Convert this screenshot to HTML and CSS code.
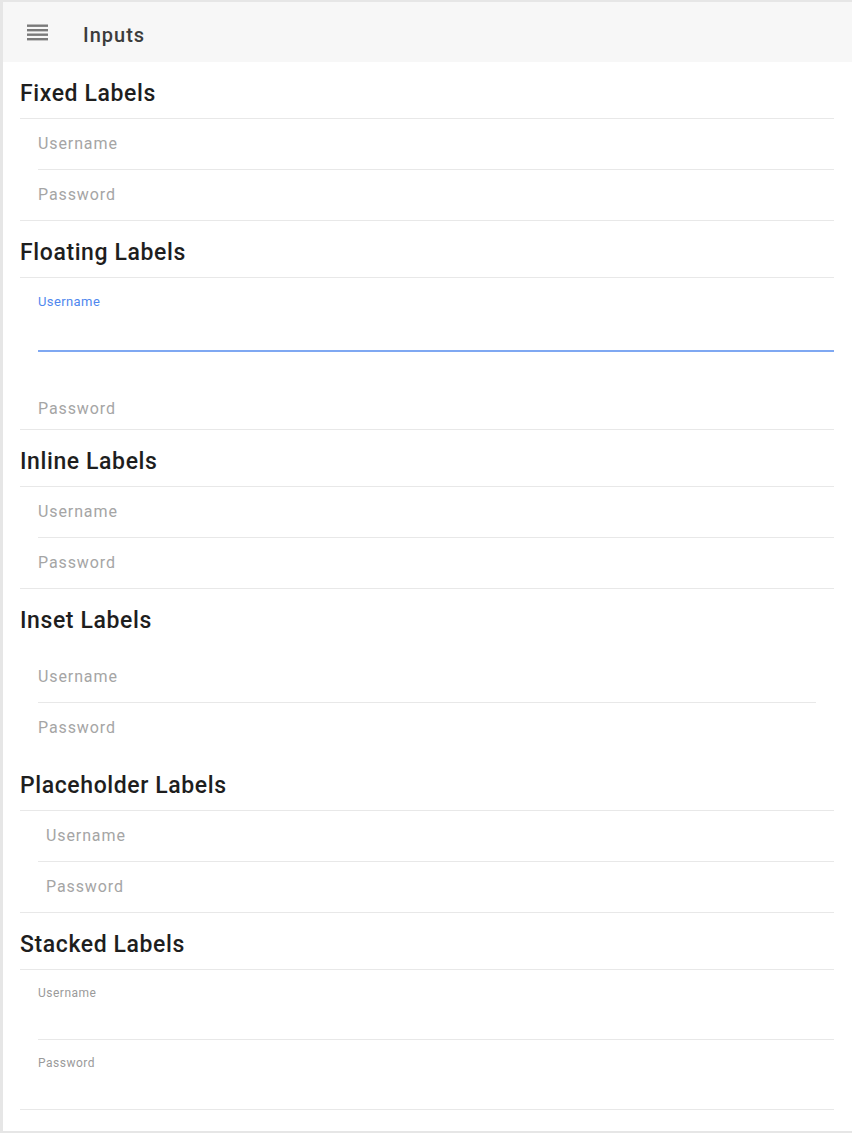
FILE: index.html
```html
<!DOCTYPE html>
<html lang="en">
<head>
<meta charset="utf-8">
<title>Inputs</title>
<link rel="stylesheet" href="styles.css">
</head>
<body>
<div class="frame">
  <header class="toolbar">
    <svg class="menu-icon" width="21" height="17" viewBox="0 0 21 17" aria-hidden="true">
      <rect x="0" y="0.5" width="21" height="2.4" fill="#7a7a7a"/>
      <rect x="0" y="5" width="21" height="2.4" fill="#7a7a7a"/>
      <rect x="0" y="9.5" width="21" height="2.4" fill="#7a7a7a"/>
      <rect x="0" y="14" width="21" height="2.4" fill="#7a7a7a"/>
    </svg>
    <span class="title">Inputs</span>
  </header>

  <main class="content">
    <section class="group">
      <h2 class="group-title">Fixed Labels</h2>
      <div class="list">
        <div class="item"><div class="item-inner"><span class="ph">Username</span></div></div>
        <div class="item last"><div class="item-inner"><span class="ph">Password</span></div></div>
      </div>
    </section>

    <section class="group">
      <h2 class="group-title">Floating Labels</h2>
      <div class="list">
        <div class="item"><div class="item-inner floating focused">
          <span class="float-label">Username</span>
          <div class="input-area"></div>
        </div></div>
        <div class="item last"><div class="item-inner floating-rest"><span class="ph">Password</span></div></div>
      </div>
    </section>

    <section class="group">
      <h2 class="group-title">Inline Labels</h2>
      <div class="list">
        <div class="item"><div class="item-inner"><span class="ph">Username</span></div></div>
        <div class="item last"><div class="item-inner"><span class="ph">Password</span></div></div>
      </div>
    </section>

    <section class="group">
      <h2 class="group-title plain">Inset Labels</h2>
      <div class="list inset">
        <div class="item"><div class="item-inner"><span class="ph">Username</span></div></div>
        <div class="item last"><div class="item-inner"><span class="ph">Password</span></div></div>
      </div>
    </section>

    <section class="group">
      <h2 class="group-title">Placeholder Labels</h2>
      <div class="list">
        <div class="item"><div class="item-inner indent"><span class="ph">Username</span></div></div>
        <div class="item last"><div class="item-inner indent"><span class="ph">Password</span></div></div>
      </div>
    </section>

    <section class="group">
      <h2 class="group-title">Stacked Labels</h2>
      <div class="list">
        <div class="item"><div class="item-inner stacked"><span class="stack-label">Username</span></div></div>
        <div class="item last"><div class="item-inner stacked"><span class="stack-label">Password</span></div></div>
      </div>
    </section>
  </main>
</div>
</body>
</html>
```

FILE: styles.css
```css
* { box-sizing: border-box; }

html, body {
  margin: 0;
  padding: 0;
  background: #ffffff;
}

body {
  font-family: Roboto, "Liberation Sans", Arial, sans-serif;
  color: #222;
}

.frame {
  border-top: 2px solid #e6e6e6;
  border-left: 3px solid #e6e6e6;
  border-bottom: 2px solid #e6e6e6;
}

.toolbar {
  height: 60px;
  background: #f7f7f7;
  display: flex;
  align-items: center;
  padding-left: 24px;
}

.menu-icon {
  display: block;
}

.title {
  margin-left: 35px;
  padding-top: 5px;
  font-size: 20px;
  font-weight: 500;
  letter-spacing: 1px;
  color: #3c3c3c;
  line-height: 24px;
}

.content {
  padding: 0 18px 21px 17px;
}

.group-title {
  margin: 0;
  padding: 18px 0 10px;
  font-size: 23px;
  letter-spacing: 0.6px;
  line-height: 28px;
  font-weight: 500;
  color: #1e1e1e;
  border-bottom: 1px solid #e8e8e8;
}

.group-title.plain {
  border-bottom-color: transparent;
}

.list {
  display: flex;
  flex-direction: column;
}

.item {
  padding-left: 18px;
}

.item.last {
  border-bottom: 1px solid #e8e8e8;
}

.item-inner {
  height: 51px;
  display: flex;
  align-items: center;
  border-bottom: 1px solid #e8e8e8;
}

.item.last .item-inner {
  height: 50px;
  border-bottom: none;
}

.ph {
  font-size: 16px;
  letter-spacing: 0.9px;
  color: #a5a5a5;
  line-height: 20px;
}

/* Floating labels */
.item-inner.floating {
  height: 74px;
  display: block;
  padding-top: 17px;
  border-bottom: 2px solid #7fa8f2;
}

.float-label {
  display: block;
  font-size: 13px;
  letter-spacing: 0.4px;
  line-height: 14px;
  color: #4f87ee;
}

.input-area {
  height: 41px;
}

.item.last .item-inner.floating-rest {
  height: 77px;
  display: block;
  padding-top: 45px;
}

.floating-rest .ph {
  display: block;
  line-height: 24px;
}

/* Inset list */
.list.inset {
  margin: 6px 18px 0 0;
}

.list.inset .item.last {
  border-bottom-color: transparent;
}

/* Placeholder labels */
.item-inner.indent {
  padding-left: 8px;
}

/* Stacked labels */
.item-inner.stacked {
  height: 70px;
  display: block;
  padding-top: 17px;
}

.item.last .item-inner.stacked {
  height: 69px;
}

.stack-label {
  display: block;
  font-size: 12px;
  letter-spacing: 0.5px;
  line-height: 13px;
  color: #9a9a9a;
}
```
